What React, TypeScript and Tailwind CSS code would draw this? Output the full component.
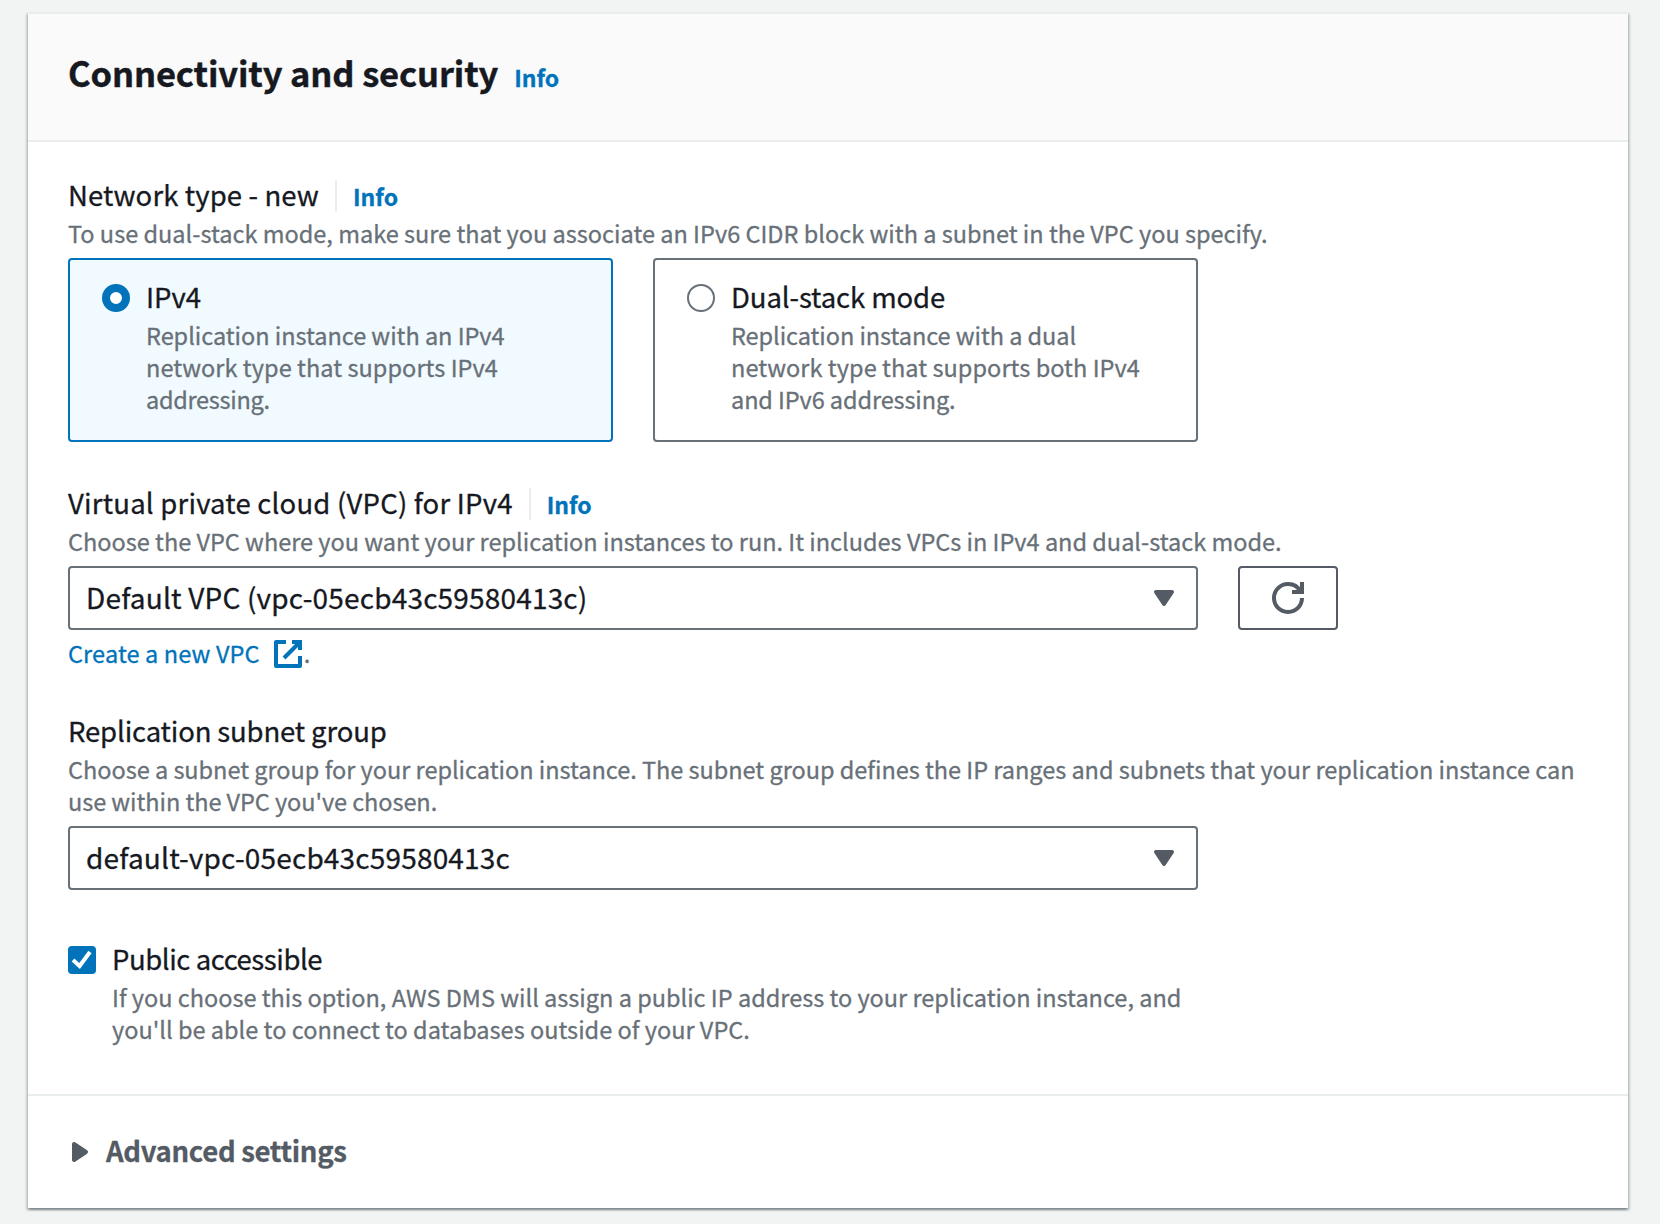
import type { ReactNode } from "react";

const hint = "text-[23.5px] leading-[32px] text-[#687078] [-webkit-text-stroke:0.3px_#687078]";
const label = "text-[27.5px] leading-[44px] text-[#16191f] [-webkit-text-stroke:0.3px_#16191f]";

function Line({ children, className = "" }: { children: ReactNode; className?: string }) {
  return <span className={`block w-fit whitespace-nowrap ${className}`}>{children}</span>;
}

function InfoLink({ className = "" }: { className?: string }) {
  return (
    <a className={`text-[23px] leading-[44px] font-bold text-[#0073bb] [-webkit-text-stroke:0.3px_#0073bb] ${className}`}>
      Info
    </a>
  );
}

function Caret({ className = "" }: { className?: string }) {
  return (
    <svg
      viewBox="0 0 16 16"
      className={`size-8 shrink-0 ${className}`}
      fill="#545b64"
      stroke="#545b64"
      strokeWidth="2"
      strokeLinejoin="round"
    >
      <path d="M4 5h8l-4 6-4-6z" />
    </svg>
  );
}

function FieldHeader({ children }: { children: ReactNode }) {
  return (
    <div className={`flex h-11 ${label}`}>
      {children}
      <span className="mt-2 ml-4 h-8 w-[2px] bg-[#eaeded]" />
      <InfoLink className="ml-4 pt-[2px]" />
    </div>
  );
}

function Select({ children }: { children: ReactNode }) {
  return (
    <div className="flex h-16 w-[1130px] items-center justify-between rounded-[4px] border-2 border-[#687078] bg-white px-4 text-[28px] leading-[44px] text-[#16191f] [-webkit-text-stroke:0.3px_#16191f]">
      <div className="pb-[3px]">{children}</div>
      <Caret />
    </div>
  );
}

function Tile({ selected, title, children }: { selected?: boolean; title: ReactNode; children: ReactNode }) {
  return (
    <div
      className={`flex h-[184px] w-[545px] rounded-[4px] border-2 pt-[14px] pl-8 ${
        selected ? "border-[#0073bb] bg-[#f1faff]" : "border-[#687078] bg-white"
      }`}
    >
      <span
        className={`mt-[10px] size-7 shrink-0 rounded-full bg-white ${
          selected ? "border-8 border-[#0073bb]" : "border-2 border-[#687078]"
        }`}
      />
      <div className="ml-4">
        <div className={label}>{title}</div>
        <div className={`mt-px ${hint}`}>{children}</div>
      </div>
    </div>
  );
}

export default function App() {
  return (
    <div className="h-[1224px] w-[1660px] bg-[#f2f3f3] pt-3 pl-7 font-['Noto_Sans_CJK_SC',sans-serif]">
      <main className="flex h-[1196px] w-[1600px] flex-col bg-white shadow-[0_2px_2px_0_rgba(0,28,36,0.3),2px_2px_2px_0_rgba(0,28,36,0.15),-2px_2px_2px_0_rgba(0,28,36,0.15)]">
        <header className="flex h-[130px] shrink-0 border-y-2 border-[#eaeded] bg-[#fafafa] pt-9 pl-10">
          <h1 className="text-[34.5px] leading-[44px] font-bold text-[#16191f] [-webkit-text-stroke:0.4px_#16191f]">
            <Line className="tracking-[-0.13px]">Connectivity and security</Line>
          </h1>
          <InfoLink className="ml-4 pt-[5px]" />
        </header>

        <section className="px-10 pt-[30px]">
          <FieldHeader>
            <Line className="tracking-[0.12px]">Network type - new</Line>
          </FieldHeader>
          <div className={`mt-px ${hint}`}>
            <Line className="tracking-[0.01px]">
              To use dual-stack mode, make sure that you associate an IPv6 CIDR block with a subnet in the VPC you specify.
            </Line>
          </div>
          <div className="mt-[9px] flex gap-10">
            <Tile selected title={<Line>IPv4</Line>}>
              <Line className="tracking-[-0.03px]">Replication instance with an IPv4</Line>
              <Line className="tracking-[0.06px]">network type that supports IPv4</Line>
              <Line className="tracking-[-0.28px]">addressing.</Line>
            </Tile>
            <Tile title={<Line className="tracking-[-0.1px]">Dual-stack mode</Line>}>
              <Line className="tracking-[-0.06px]">Replication instance with a dual</Line>
              <Line className="tracking-[0.06px]">network type that supports both IPv4</Line>
              <Line className="tracking-[-0.1px]">and IPv6 addressing.</Line>
            </Tile>
          </div>
        </section>

        <section className="px-10 pt-[38px]">
          <FieldHeader>
            <Line className="tracking-[0.21px]">Virtual private cloud (VPC) for IPv4</Line>
          </FieldHeader>
          <div className={`mt-px ${hint}`}>
            <Line>
              Choose the VPC where you want your replication instances to run. It includes VPCs in IPv4 and dual-stack mode.
            </Line>
          </div>
          <div className="mt-[9px] flex gap-10">
            <Select>
              <Line className="tracking-[0.18px]">Default VPC (vpc-05ecb43c59580413c)</Line>
            </Select>
            <button className="flex h-16 w-[100px] items-center justify-center rounded-[4px] border-2 border-[#545b64] bg-white">
              <svg viewBox="0 0 16 16" className="size-8" fill="none" stroke="#545b64" strokeWidth="2">
                <path d="M10 5h5V0" />
                <path d="M15 8a6.957 6.957 0 0 1-7 7 6.957 6.957 0 0 1-7-7 6.957 6.957 0 0 1 7-7 6.87 6.87 0 0 1 6.3 4" />
              </svg>
            </button>
          </div>
          <div className={`mt-[6px] flex h-8 ${hint}`}>
            <a className="pt-px text-[#0073bb] [-webkit-text-stroke:0.3px_#0073bb]">
              <Line className="tracking-[0.13px]">Create a new VPC</Line>
            </a>
            <svg viewBox="0 0 16 16" className="mt-[2px] ml-3 size-8" fill="none" stroke="#0073bb" strokeWidth="2">
              <path d="M10 2h4v4" />
              <path d="M6 10l8-8" />
              <path d="M14 9.048V14H2V2h5" strokeLinejoin="round" />
            </svg>
            <Line className="pt-px">.</Line>
          </div>
        </section>

        <section className="px-10 pt-10">
          <div className={label}>
            <Line className="tracking-[-0.15px]">Replication subnet group</Line>
          </div>
          <div className={`mt-px mb-[9px] ${hint}`}>
            <Line className="tracking-[-0.015px]">
              Choose a subnet group for your replication instance. The subnet group defines the IP ranges and subnets that your replication instance can
            </Line>
            <Line className="tracking-[-0.06px]">use within the VPC you've chosen.</Line>
          </div>
          <Select>
            <Line className="tracking-[0.18px]">default-vpc-05ecb43c59580413c</Line>
          </Select>
        </section>

        <section className="flex px-10 pt-[46px]">
          <span className="mt-[10px] size-7 shrink-0 rounded-[4px] bg-[#0073bb]">
            <svg viewBox="0 0 14 14" className="size-7" fill="none" stroke="#fff" strokeWidth="2">
              <path d="M2.5 7l3.3 3L11 3" />
            </svg>
          </span>
          <div className="ml-4">
            <div className={label}>
              <Line className="tracking-[-0.43px]">Public accessible</Line>
            </div>
            <div className={`mt-px ${hint}`}>
              <Line>
                If you choose this option, AWS DMS will assign a public IP address to your replication instance, and
              </Line>
              <Line className="tracking-[0.02px]">you'll be able to connect to databases outside of your VPC.</Line>
            </div>
          </div>
        </section>

        <footer className="mt-[49px] flex border-t-2 border-[#eaeded] pt-8 pl-9">
          <Caret className="mt-2 -rotate-90" />
          <h2 className="ml-[10px] text-[27.5px] leading-[44px] font-bold text-[#545b64] [-webkit-text-stroke:0.3px_#545b64]">
            <Line className="tracking-[-0.31px]">Advanced settings</Line>
          </h2>
        </footer>
      </main>
    </div>
  );
}
